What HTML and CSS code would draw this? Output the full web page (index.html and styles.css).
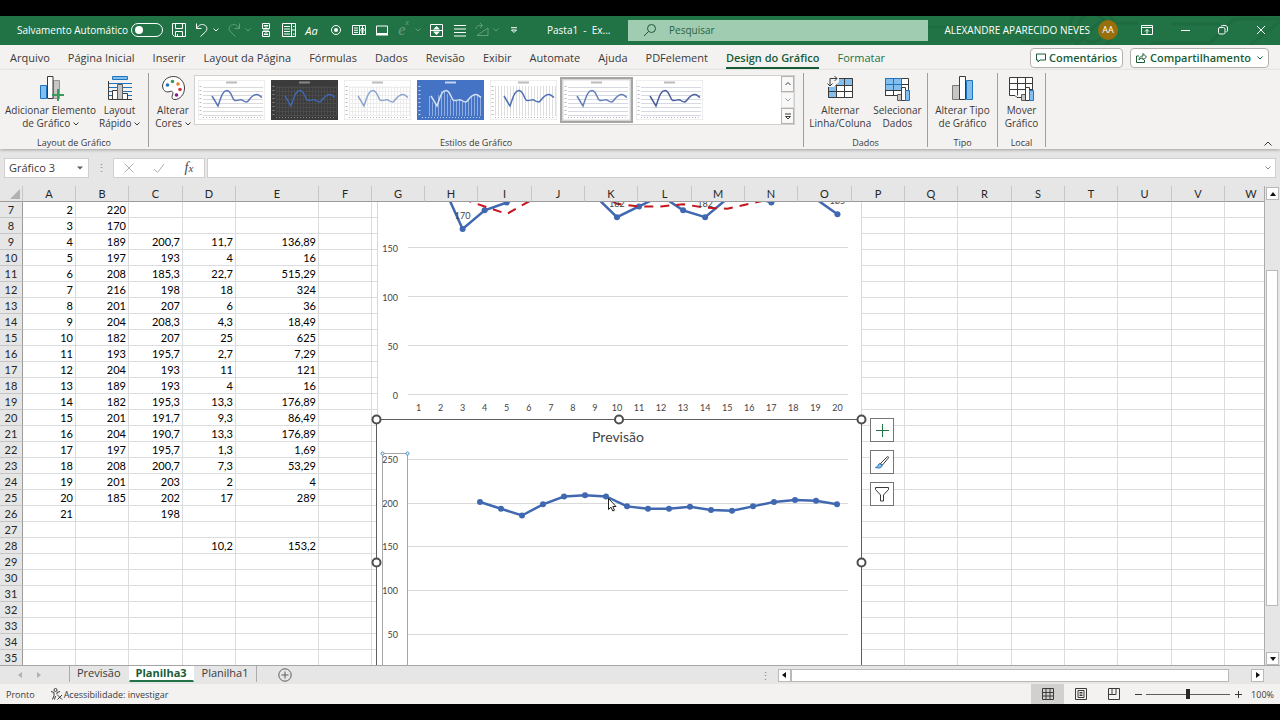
FILE: index.html
```html
<!DOCTYPE html>
<html lang="pt-BR">
<head>
  <meta charset="UTF-8">
  <title>Pasta1 - Excel</title>
  <link rel="stylesheet" href="styles.css">
</head>
<body>

  <!-- barra de título -->
  <header class="titlebar">
    <svg class="title-art" width="360" height="29" viewBox="0 0 360 29">
      <g fill="none" stroke="#185c37" stroke-width="3" opacity=".3">
        <path d="M0 11h40M100 25h60l18-18h40"/><circle cx="172" cy="12" r="22"/><circle cx="172" cy="12" r="14"/>
        <path d="M230 27h60l24-24h46M330 29l30-24M250 8h50"/>
      </g>
    </svg>
    <label class="autosave">Salvamento Automático <input type="checkbox" class="toggle"></label>
    <div class="qat">
      <button class="qbtn" aria-label="Salvar"><svg width="16" height="16"><path d="M1.500 1.500h13v13h-11l-2-2zM4.500 1.500v5h7v-5M4.500 14.500v-5h7v5M6.500 14v-2"/></svg></button>
      <button class="qbtn" aria-label="Desfazer"><svg width="16" height="16"><path d="M2.500 1.500v5h5M2.500 6.500C5 2.500 8 1.800 10.500 3c3 1.600 3 4.800 1 6.800L6.500 14.500"/></svg></button>
      <button class="drop" aria-label="Opções de desfazer"><svg width="6" height="4"><path d="M.5.5 3 3 5.500.5"/></svg></button>
      <button class="qbtn off" aria-label="Refazer"><svg width="16" height="16"><path d="M13.500 1.500v5h-5M13.500 6.500C11 2.500 8 1.800 5.500 3c-3 1.600-3 4.800-1 6.800l5 4.700"/></svg></button>
      <button class="drop off" aria-label="Opções de refazer"><svg width="6" height="4"><path d="M.5.5 3 3 5.500.5"/></svg></button>
      <button class="qbtn" aria-label="Barra de rolagem"><svg width="16" height="16"><path d="M4.500 1.500h7v5h-7zM4.500 9.500h7v5h-7zM6 3.500h4L8 5.500zM6 12.500h4l-2-2zM5 8h6"/></svg></button>
      <button class="qbtn" aria-label="Caixa de listagem"><svg width="16" height="16"><path d="M1.500 1.500h13v13h-13zM10.500 1.500v13M3 4.500h6M3 7h6M3 9.500h6M3 12h6M12 4.500h1.500M12 12h1.500M10.500 8h4"/></svg></button>
      <button class="qbtn aa" aria-label="Fonte">Aa</button>
      <button class="qbtn" aria-label="Botão de opção"><svg width="16" height="16"><circle cx="9" cy="8" r="4.500"/><circle cx="9" cy="8" r="2" class="solid"/></svg></button>
      <button class="qbtn" aria-label="Caixa de combinação"><svg width="16" height="16"><path d="M2.500 3.500h13v9h-13zM9.500 3.500v9M4 6h4M4 8.200h4M4 10.400h4M9.500 8h6M11 6.500h3M11 10h3M12.500 4v8"/></svg></button>
      <button class="qbtn" aria-label="Botão"><svg width="16" height="16"><path d="M3.500 4h11v7.500h-11z"/><path d="M3 12.500h12" stroke-width="2"/></svg></button>
      <button class="qbtn off ex" aria-label="Sobrescrito">e<sup>x</sup></button>
      <button class="drop off" aria-label="Opções de equação"><svg width="6" height="4"><path d="M.5.5 3 3 5.500.5"/></svg></button>
      <button class="qbtn" aria-label="Botão de rotação"><svg width="16" height="16"><path d="M2.500 2.500h12v12h-12zM3 8.500h11"/><path class="solid" d="M5 7.500h7L8.500 4zM5 9.500h7L8.500 13z"/></svg></button>
      <button class="qbtn" aria-label="Justificar"><svg width="16" height="16"><path d="M3 3.500h12M3 7h12M3 10.500h12M3 14h12"/></svg></button>
      <button class="qbtn off" aria-label="Girar"><svg width="16" height="16"><path d="M3 13.500h11V6zM2 7c0-3 3-4 6-3.500M6 1l2.500 2.500L6 6"/></svg></button>
      <button class="drop off" aria-label="Opções de girar"><svg width="6" height="4"><path d="M.5.5 3 3 5.500.5"/></svg></button>
      <button class="qbtn" aria-label="Personalizar"><svg width="8" height="7"><path d="M1 .7h6M1.500 3 4 5.500 6.500 3z"/></svg></button>
    </div>
    <span class="doc-name">Pasta1&nbsp; -&nbsp; Ex...</span>
    <label class="search">
      <svg width="14" height="14" viewBox="0 0 14 14"><circle cx="8.500" cy="5.500" r="4"/><path d="M5.500 8.500 1 13"/></svg>
      <input type="search" placeholder="Pesquisar" aria-label="Pesquisar">
    </label>
    <div class="account">
      <span class="user">ALEXANDRE APARECIDO NEVES</span>
      <span class="avatar">AA</span>
      <button class="winbtn" aria-label="Exibição da faixa"><svg width="12" height="10"><path d="M.5.5h11v9H.5zM.5 2.500h11M6 9V4.500M4 6.500l2-2 2 2"/></svg></button>
      <button class="winbtn" aria-label="Minimizar"><svg width="10" height="10"><path d="M1 5.500h9"/></svg></button>
      <button class="winbtn" aria-label="Restaurar"><svg width="10" height="10"><rect x=".5" y="2.500" width="6.500" height="6.500" rx="1.500"/><path d="M3 1.500C3 .8 4 .5 5 .5h2C8.500.5 9.500 1.500 9.500 3v2c0 1-.5 2-1.200 2"/></svg></button>
      <button class="winbtn" aria-label="Fechar"><svg width="10" height="10"><path d="M1 1l8 8M9 1 1 9"/></svg></button>
    </div>
  </header>

  <!-- guias da faixa de opções -->
  <nav class="tabs">
    <a href="#">Arquivo</a>
    <a href="#">Página Inicial</a>
    <a href="#">Inserir</a>
    <a href="#">Layout da Página</a>
    <a href="#">Fórmulas</a>
    <a href="#">Dados</a>
    <a href="#">Revisão</a>
    <a href="#">Exibir</a>
    <a href="#">Automate</a>
    <a href="#">Ajuda</a>
    <a href="#">PDFelement</a>
    <a href="#" class="active">Design do Gráfico</a>
    <a href="#" class="context">Formatar</a>
    <div class="tab-actions">
      <button class="pill"><svg width="10" height="10"><path d="M.5 1h9v6H4L2 9V7H.5z"/></svg>Comentários</button>
      <button class="pill"><svg width="11" height="11"><path d="M3 4H.5v6.500h8V8M3 8c0-3 2-4 4-4V1.500L10.500 5 7 8V6C5.500 6 4 6.500 3 8z"/></svg>Compartilhamento<svg class="pill-drop" width="6" height="4"><path d="M.5.5 3 3 5.500.5"/></svg></button>
    </div>
  </nav>

  <!-- faixa de opções -->
  <section class="ribbon">
    <div class="group g-layout">
      <div class="group-body">
        <button class="rbtn rbtn-wide">
          <svg width="26" height="26"><path fill="#83beec" stroke="#1e74bd" d="M2.500 10.500h6v13h-6z"/><path fill="#c8c6c4" stroke="#979593" d="M15.500 5.500h6v18h-6z"/><path fill="#fff" stroke="#3b3a39" d="M9.500 1.500h5.500v22H9.500z"/><path stroke="#3c9a5f" stroke-width="2" d="M20 14v12M14 20h12"/></svg>
          <span>Adicionar Elemento<br>de Gráfico <svg class="chev" width="6" height="4"><path d="M.5.5 3 3 5.500.5"/></svg></span>
        </button>
        <button class="rbtn">
          <svg width="26" height="26"><path fill="#83beec" stroke="#1e74bd" d="M5.500 1.500h15v3h-15z"/><path stroke="#1e74bd" d="M1 8.500h24M1 12.500h24M1 16.500h24M1 20.500h24"/><path fill="#fff" stroke="#3b3a39" d="M5.500 15.500h5v9h-5zM15.500 18.500h5v6h-5z"/><path fill="#c8c6c4" stroke="#605e5c" d="M10.500 9.500h5v15h-5z"/><path stroke="#3b3a39" d="M1.500 6v18.500H25"/></svg>
          <span>Layout<br>Rápido <svg class="chev" width="6" height="4"><path d="M.5.5 3 3 5.500.5"/></svg></span>
        </button>
      </div>
      <div class="group-label">Layout de Gráfico</div>
    </div>
    <div class="group g-styles">
      <div class="group-body">
        <button class="rbtn">
          <svg width="26" height="26"><path fill="#fff" stroke="#3b3a39" d="M2.500 11C3 5 8 1.500 13.500 1.500c6 0 11 5 11 11.500S20 24.500 15 24.500c-3 0-3.500-2-2.500-4.500s0-4.500-2.500-3.500-7 .5-7.500-5.500z"/><circle cx="7.500" cy="10" r="1.800" fill="#2372ba" stroke="none"/><circle cx="12.500" cy="6.500" r="1.800" fill="#3c9a5f" stroke="none"/><circle cx="18" cy="9" r="1.800" fill="#e8842c" stroke="none"/><circle cx="20" cy="14.500" r="1.800" fill="#d13438" stroke="none"/><circle cx="16.500" cy="20" r="1.800" fill="#881798" stroke="none"/></svg>
          <span>Alterar<br>Cores <svg class="chev" width="6" height="4"><path d="M.5.5 3 3 5.500.5"/></svg></span>
        </button>
        <div class="gallery">
          <div class="thumbs" id="thumbs"></div>
          <div class="gallery-scroll">
            <button aria-label="Linha acima"><svg width="6" height="4"><path d="M.5 3 3 .5 5.500 3"/></svg></button>
            <button aria-label="Linha abaixo" disabled><svg width="6" height="4"><path d="M.5.5 3 3 5.500.5"/></svg></button>
            <button aria-label="Mais estilos"><svg width="8" height="7"><path d="M1 1h6M1.500 3.500 4 6l2.500-2.500z"/></svg></button>
          </div>
        </div>
      </div>
      <div class="group-label">Estilos de Gráfico</div>
    </div>
    <div class="group g-data">
      <div class="group-body">
        <button class="rbtn">
          <svg width="26" height="26"><path fill="#fff" stroke="#3b3a39" d="M1.500 3.500h24v19h-24z"/><path fill="#83beec" stroke="none" d="M9 4h16v6H9zM2 11h7v11H2z"/><path stroke="#3b3a39" d="M1.500 10.500h24M1.500 16.500h24M9.500 3.500v19M17.500 3.500v19M1.500 22.500h24v-19"/><path fill="#f3f2f1" stroke="none" d="M0 0h12v7L7 12H0z"/><path stroke="#3b3a39" d="M3 11V3.500h7M.5 8.500 3 11l2.500-2.500M7.500 1 10 3.500 7.500 6"/></svg>
          <span>Alternar<br>Linha/Coluna</span>
        </button>
        <button class="rbtn">
          <svg width="26" height="26"><path fill="#fff" stroke="#3b3a39" d="M1.500 3.500h23v17h-23z"/><path fill="#83beec" stroke="#1e74bd" d="M1.500 3.500h16v12h-16zM1.500 9.500h16M9.500 3.500v12"/><path stroke="#3b3a39" d="M1.500 15.500h16M17.500 9.500h7M9.500 15v5M1.500 15v5.500H14"/><path fill="#c8c6c4" stroke="#605e5c" d="M13.500 19.500h4v6h-4z"/><path fill="#fff" stroke="#3b3a39" d="M17.500 12.500h4v13h-4z"/><path fill="#83beec" stroke="#1e74bd" d="M21.500 15.500h4v10h-4z"/></svg>
          <span>Selecionar<br>Dados</span>
        </button>
      </div>
      <div class="group-label">Dados</div>
    </div>
    <div class="group g-type">
      <div class="group-body">
        <button class="rbtn">
          <svg width="26" height="26"><path fill="#c8c6c4" stroke="#797775" d="M2.500 10.500h7v14h-7z"/><path fill="#83beec" stroke="#1e74bd" d="M16.500 5.500h6v19h-6z"/><path fill="#fff" stroke="#3b3a39" d="M9.500 1.500h6v23h-6z"/></svg>
          <span>Alterar Tipo<br>de Gráfico</span>
        </button>
      </div>
      <div class="group-label">Tipo</div>
    </div>
    <div class="group g-place">
      <div class="group-body">
        <button class="rbtn">
          <svg width="26" height="26"><path fill="#fff" stroke="#3b3a39" d="M1.500 2.500h23v20H9l-2-2H1.500z"/><path stroke="#3b3a39" d="M1.500 8.500h23M1.500 14.500h23M9.500 2.500v18M17.500 2.500v18"/><path fill="#c8c6c4" stroke="#605e5c" d="M13.500 19.500h4v6h-4z"/><path fill="#fff" stroke="#3b3a39" d="M17.500 12.500h4v13h-4z"/><path fill="#83beec" stroke="#1e74bd" d="M21.500 15.500h4v10h-4z"/></svg>
          <span>Mover<br>Gráfico</span>
        </button>
      </div>
      <div class="group-label">Local</div>
    </div>
    <button class="collapse" aria-label="Recolher"><svg width="8" height="5"><path d="M.5 4.500 4 1l3.500 3.500"/></svg></button>
  </section>

  <!-- barra de fórmulas -->
  <section class="formula-bar">
    <div class="name-box">
      <input type="text" value="Gráfico 3" aria-label="Caixa de nome">
      <svg width="6" height="4"><path d="M0 .5h6L3 3.500z"/></svg>
    </div>
    <span class="dots">⋮</span>
    <div class="fx-buttons">
      <button aria-label="Cancelar" disabled><svg width="12" height="12"><path d="M1.500 1.500l9 9M10.500 1.500l-9 9"/></svg></button>
      <button aria-label="Inserir" disabled><svg width="12" height="12"><path d="M1 7l3.500 3.500L11 2"/></svg></button>
      <button class="fx">f<sub>x</sub></button>
    </div>
    <div class="formula">
      <input type="text" aria-label="Fórmula">
      <svg width="6" height="4"><path d="M.5.5 3 3 5.500.5"/></svg>
    </div>
  </section>

  <!-- planilha -->
  <main class="workspace">
    <div class="sheet">
      <table class="grid" id="grid"></table>
      <svg class="chart chart-top" id="chartTop" width="485" height="218"></svg>
      <svg class="chart chart-forecast" id="chartForecast" width="486" height="260"></svg>
      <div class="chart-tools">
        <button aria-label="Elementos do gráfico"><svg width="16" height="16"><path stroke="#217346" d="M8.500 2v13M2 8.500h13"/></svg></button>
        <button aria-label="Estilos de gráfico"><svg width="16" height="16"><path fill="#83beec" stroke="#1e74bd" d="M1.500 13.500c3-.5 2-3.500 4.500-4l2 2c0 2.500-3.500 3-6.500 2z"/><path fill="#fff" stroke="#3b3a39" d="M6.500 9.500 13 3c1-1 2 0 1.200 1.200L8.500 11z"/></svg></button>
        <button aria-label="Filtros de gráfico"><svg width="16" height="16"><path fill="#fff" stroke="#3b3a39" d="M1.500 1.500h13v2L9.500 9v6h-3V9l-5-5.500z"/></svg></button>
      </div>
      <svg class="cursor" width="10" height="14"><path fill="#fff" stroke="#222" d="M.5.5v11l2.500-2.300 1.800 3.800 1.700-.8-1.700-3.700H8z"/></svg>
    </div>
    <div class="vscroll">
      <button aria-label="Rolar para cima"><svg width="6" height="4"><path d="M0 4h6L3 0z"/></svg></button>
      <div class="vtrack"><div class="vthumb"></div></div>
      <button aria-label="Rolar para baixo"><svg width="6" height="4"><path d="M0 0h6L3 4z"/></svg></button>
    </div>
  </main>

  <!-- guias das planilhas -->
  <footer class="sheet-bar">
    <div class="sheet-nav">
      <button aria-label="Anterior" disabled><svg width="4" height="6"><path d="M4 0v6L0 3z"/></svg></button>
      <button aria-label="Próxima" disabled><svg width="4" height="6"><path d="M0 0v6l4-3z"/></svg></button>
    </div>
    <div class="sheet-tabs">
      <button>Previsão</button>
      <button class="active">Planilha3</button>
      <button>Planilha1</button>
    </div>
    <button class="add-sheet" aria-label="Nova planilha"><svg width="14" height="14"><circle cx="7" cy="7" r="6.200"/><path d="M7 3.500v7M3.500 7h7"/></svg></button>
    <span class="dots">⋮</span>
    <div class="hscroll">
      <button aria-label="Rolar para a esquerda"><svg width="4" height="6"><path d="M4 0v6L0 3z"/></svg></button>
      <div class="htrack"><div class="hthumb"></div></div>
      <button aria-label="Rolar para a direita"><svg width="4" height="6"><path d="M0 0v6l4-3z"/></svg></button>
    </div>
  </footer>

  <!-- barra de status -->
  <footer class="status-bar">
    <span>Pronto</span>
    <button class="access"><svg width="13" height="12"><circle cx="5.500" cy="2" r="1.500"/><path d="M1 3.500l3 1v3l-1.500 4M10 3.500l-3 1v2M5.500 8l-1 3.500M7.500 7l4.500 4.500M12 7l-4.500 4.500"/></svg>Acessibilidade: investigar</button>
    <div class="views">
      <button class="active" aria-label="Normal"><svg width="12" height="12"><path d="M.5.5h11v11H.5zM.5 4.500h11M.5 8h11M4 .5v11M8 .5v11"/></svg></button>
      <button aria-label="Layout da Página"><svg width="12" height="12"><path d="M.5.5h11v11H.5zM3 2.500h6v7H3zM4.500 4.500h3M4.500 6h3M4.500 7.500h3"/></svg></button>
      <button aria-label="Quebra de página"><svg width="12" height="12"><path d="M.5.5h11v11H.5zM4 .5v6M8 .5v6M.5 6.500H8"/></svg></button>
    </div>
    <div class="zoom">
      <button aria-label="Reduzir"><svg width="7" height="7"><path d="M0 3.500h7"/></svg></button>
      <input type="range" min="10" max="190" value="100" aria-label="Zoom">
      <button aria-label="Ampliar"><svg width="7" height="7"><path d="M0 3.500h7M3.500 0v7"/></svg></button>
      <span class="zoom-value">100%</span>
    </div>
  </footer>

  <script src="script.js"></script>
</body>
</html>
```

FILE: styles.css
```css
* {
  box-sizing: border-box;
}
body {
  margin: 0;
  padding: 16px 0;
  height: 100vh;
  display: flex;
  flex-direction: column;
  background: #000;
  color: #3b3a39;
  font-family: "Open Sans", "Noto Sans", sans-serif;
  font-size: 11px;
  overflow: hidden;
}
button, input {
  font: inherit;
  color: inherit;
  margin: 0;
  padding: 0;
  border: none;
  background: none;
}
svg {
  fill: none;
  stroke: currentColor;
  flex: none;
}
.off {
  opacity: .3;
}

/* barra de título */
.titlebar {
  position: relative;
  flex: none;
  height: 29px;
  padding-bottom: 1px;
  display: flex;
  align-items: center;
  background: #217346;
  color: #fff;
}
.title-art {
  position: absolute;
  right: 0;
  top: 0;
}
.autosave {
  width: 167px;
  padding-left: 17px;
  display: flex;
  align-items: center;
  gap: 3px;
  font-size: 10px;
  white-space: nowrap;
}
.toggle {
  appearance: none;
  width: 32px;
  height: 14px;
  border: 1px solid #fff;
  border-radius: 7px;
  padding: 2px 3px;
}
.toggle::before {
  content: "";
  display: block;
  width: 8px;
  height: 8px;
  border-radius: 50%;
  background: #fff;
}
.qat {
  display: flex;
  height: 24px;
}
.qbtn {
  width: 23px;
  display: flex;
  align-items: center;
  justify-content: center;
}
.drop {
  width: 9px;
  display: flex;
  align-items: center;
}
.qat .solid {
  fill: #fff;
  stroke: none;
}
.aa {
  font-style: italic;
}
.ex {
  font-family: "Liberation Serif", serif;
  font-style: italic;
  font-size: 16px;
}
.ex sup {
  font-size: 8px;
  align-self: flex-start;
}
.doc-name {
  width: 103px;
  padding-left: 22px;
  font-size: 10px;
  white-space: nowrap;
}
.search {
  flex: 0 1 300px;
  height: 21px;
  display: flex;
  align-items: center;
  gap: 12px;
  padding-left: 15px;
  background: #a0cdb2;
  color: #1e5638;
  position: relative;
}
.search input {
  width: 100%;
  outline: none;
  font-size: 10px;
}
.search input::placeholder {
  color: #2c6344;
  opacity: 1;
}
.account {
  position: relative;
  margin-left: auto;
  display: flex;
  align-items: center;
  height: 100%;
}
.user {
  font-size: 10px;
  white-space: nowrap;
}
.avatar {
  width: 20px;
  height: 20px;
  margin: 0 10px 0 8px;
  border-radius: 50%;
  background: #986f0b;
  font-size: 9px;
  line-height: 20px;
  text-align: center;
}
.winbtn {
  width: 38px;
  height: 100%;
  display: flex;
  align-items: center;
  justify-content: center;
}

/* guias */
.tabs {
  flex: none;
  height: 25px;
  display: flex;
  align-items: center;
  gap: 18px;
  padding: 0 11px 0 10px;
  background: #f3f2f1;
}
.tabs a {
  color: #3b3a39;
  text-decoration: none;
  white-space: nowrap;
  line-height: 18px;
  border-bottom: 2px solid transparent;
  padding-top: 2px;
}
.tabs .active {
  color: #185c37;
  font-weight: 600;
  border-color: #185c37;
}
.tabs .context {
  color: #217346;
}
.tab-actions {
  margin-left: auto;
  display: flex;
  gap: 7px;
}
.pill {
  height: 20px;
  display: flex;
  align-items: center;
  gap: 3px;
  padding: 0 5px;
  border: 1px solid #b3b0ad;
  border-radius: 4px;
  background: #fff;
  color: #185c37;
  font-weight: 600;
}
.pill-drop {
  margin-left: 3px;
}

/* faixa de opções */
.ribbon {
  flex: none;
  height: 79px;
  display: flex;
  align-items: stretch;
  padding: 3px 0 2px;
  background: #f3f2f1;
  position: relative;
  font-size: 10px;
  box-shadow: 0 1px 3px rgba(0,0,0,.3);
  z-index: 1;
}
.group {
  flex: none;
  display: flex;
  flex-direction: column;
  justify-content: space-between;
  border-right: 1px solid #a19f9d;
}
.group-body {
  display: flex;
  justify-content: center;
}
.group-label {
  text-align: center;
  font-size: 9px;
  line-height: 8px;
}
.g-layout {
  width: 149px;
}
.g-layout .group-body {
  justify-content: flex-start;
  padding-left: 2px;
}
.g-styles {
  width: 655px;
}
.g-styles .group-body {
  justify-content: flex-start;
}
.g-styles .rbtn {
  width: 45px;
  padding-left: 3px;
}
.g-data {
  width: 124px;
}
.g-type {
  width: 70px;
}
.g-place {
  width: 48px;
}
.rbtn {
  display: flex;
  flex-direction: column;
  align-items: center;
  gap: 3px;
  padding: 2px 0 0;
  line-height: 13px;
  white-space: nowrap;
}
.rbtn-wide {
  width: 97px;
}
.chev {
  vertical-align: middle;
}
.gallery {
  display: flex;
  width: 601px;
  height: 50px;
  margin-top: 2px;
  background: #fff;
  border: 1px solid #d2d0ce;
}
.thumbs {
  flex: 1;
  display: flex;
  align-items: center;
}
.thumb {
  width: 73px;
  height: 46px;
  padding: 1px;
  border: 2px solid transparent;
}
.thumb svg {
  display: block;
}
.thumb.selected {
  border-color: #a6a6a6;
  background: #d4d4d4;
}
.gallery-scroll {
  width: 13px;
  display: flex;
  flex-direction: column;
}
.gallery-scroll button {
  flex: 1;
  display: flex;
  align-items: center;
  justify-content: center;
  border: 1px solid #b3b0ad;
  background: #f8f8f8;
}
.gallery-scroll button:disabled {
  border-color: #e1dfdd;
  color: #a19f9d;
}
.g-data .group-body {
  gap: 2px;
}
.collapse {
  margin: auto 8px 0 auto;
  height: 8px;
  display: flex;
  align-items: center;
}

/* barra de fórmulas */
.formula-bar {
  flex: none;
  height: 37px;
  display: flex;
  align-items: center;
  padding: 0 4px;
  background: #e6e6e6;
}
.name-box, .formula, .fx-buttons {
  height: 20px;
  display: flex;
  align-items: center;
  border: 1px solid #d2d0ce;
  background: #fff;
}
.name-box {
  width: 85px;
  padding: 0 5px 0 4px;
}
.name-box input {
  width: 100%;
}
.name-box svg {
  fill: #605e5c;
  stroke: none;
}
.dots {
  width: 24px;
  text-align: center;
  color: #8a8886;
}
.fx-buttons {
  width: 92px;
  color: #b3b0ad;
}
.fx-buttons button {
  flex: 1;
}
.fx-buttons svg {
  display: block;
  margin: auto;
}
.fx-buttons .fx {
  color: #484644;
  font-family: "Liberation Serif", serif;
  font-style: italic;
  font-size: 14px;
  line-height: 16px;
}
.fx sub {
  font-size: 11px;
  vertical-align: baseline;
}
.formula {
  flex: 1;
  margin-left: 2px;
  padding-right: 4px;
  color: #8a8886;
}
.formula input {
  flex: 1;
  outline: none;
}

/* planilha */
.workspace {
  flex: 1;
  min-height: 0;
  display: flex;
  background: #e6e6e6;
}
.sheet {
  position: relative;
  flex: 1;
  min-width: 0;
  overflow: hidden;
  background: #fff;
}
.grid {
  table-layout: fixed;
  width: 1278px;
  border-collapse: separate;
  border-spacing: 0;
  font-family: Lato, Carlito, sans-serif;
  font-size: 11px;
  color: #000;
}
.grid th, .grid td {
  height: 16px;
  padding: 0 2px;
  line-height: 15px;
  border-right: 1px solid #dadcdd;
  border-bottom: 1px solid #dadcdd;
  white-space: nowrap;
}
.grid td {
  text-align: right;
}
.grid th {
  background: #e6e6e6;
  font-weight: normal;
  color: #262626;
  border-color: #c6c6c6;
}
.grid thead th {
  border-bottom-color: #9b9b9b;
}
.grid tbody th {
  border-right-color: #9b9b9b;
}
.corner svg {
  display: block;
  margin-left: auto;
  fill: #b2b2b2;
  stroke: none;
}
.chart {
  position: absolute;
  background: #fff;
  overflow: hidden;
}
.chart text {
  font-family: Lato, Carlito, sans-serif;
  font-size: 9px;
  fill: #444;
  stroke: none;
}
.chart .title {
  font-size: 14px;
}
.chart .gridline {
  stroke: #d9d9d9;
}
.chart .actual {
  stroke: #4068b1;
  stroke-width: 2.500;
}
.chart .forecast {
  stroke: #c4161c;
  stroke-width: 2;
  stroke-dasharray: 9 7;
}
.chart .dot {
  fill: #4068b1;
  stroke: none;
}
.chart .frame {
  stroke: #5f5f5f;
}
.chart .axis-box {
  stroke: #a6a6a6;
}
.chart .handle {
  fill: #fff;
  stroke: #4d4d4d;
  stroke-width: 2;
}
.chart .mini-handle {
  fill: #fff;
  stroke: #3a8fc0;
}
.chart-top {
  left: 377px;
  top: 16px;
}
.chart-forecast {
  left: 376px;
  top: 233px;
  overflow: visible;
}
.chart-tools {
  position: absolute;
  left: 870px;
  top: 232px;
  display: flex;
  flex-direction: column;
  gap: 8px;
}
.chart-tools button {
  width: 24px;
  height: 24px;
  display: flex;
  align-items: center;
  justify-content: center;
  border: 1px solid #767676;
  background: #fff;
}
.cursor {
  position: absolute;
  left: 608px;
  top: 312px;
}
.vscroll {
  width: 16px;
  display: flex;
  flex-direction: column;
  padding: 1px 2px 0 1px;
  border-left: 1px solid #ababab;
}
.vscroll button, .hscroll button {
  flex: none;
  width: 13px;
  height: 13px;
  display: flex;
  align-items: center;
  justify-content: center;
  border: 1px solid #b9b9b9;
  background: #fff;
  color: #111;
}
.vscroll svg, .hscroll svg, .sheet-nav svg {
  fill: currentColor;
  stroke: none;
}
.vtrack {
  flex: 1;
  padding-top: 70px;
}
.vthumb {
  height: 88%;
  border: 1px solid #b9b9b9;
  background: #fff;
}

/* guias das planilhas */
.sheet-bar {
  flex: none;
  height: 19px;
  display: flex;
  align-items: center;
  background: #e6e6e6;
  border-top: 1px solid #a6a6a6;
}
.sheet-nav {
  width: 69px;
  padding-left: 18px;
  display: flex;
  gap: 15px;
  color: #b3b0ad;
}
.sheet-nav button {
  display: flex;
}
.sheet-tabs {
  display: flex;
  align-self: stretch;
  padding-bottom: 2px;
}
.sheet-tabs button {
  padding: 0 7px 2px;
  line-height: 14px;
  border-left: 1px solid #ababab;
  border-right: 1px solid transparent;
}
.sheet-tabs .active {
  background: #fff;
  color: #185c37;
  font-weight: bold;
  padding: 0 6px;
  border-color: transparent;
  border-bottom: 2px solid #217346;
}
.sheet-tabs button:last-child {
  border-color: transparent #ababab transparent transparent;
}
.add-sheet {
  margin-left: 21px;
  display: flex;
  color: #605e5c;
}
.sheet-bar .dots {
  margin-left: auto;
}
.hscroll {
  flex: none;
  width: 38%;
  display: flex;
  margin-right: 16px;
}
.htrack {
  flex: 1;
  padding-right: 22px;
}
.hthumb {
  height: 13px;
  border: 1px solid #b9b9b9;
  background: #fff;
}

/* barra de status */
.status-bar {
  flex: none;
  height: 20px;
  display: flex;
  align-items: center;
  padding: 0 6px;
  background: #f3f2f1;
  font-size: 9px;
}
.access {
  display: flex;
  align-items: center;
  gap: 1px;
  margin-left: 15px;
}
.views {
  margin-left: auto;
  display: flex;
  align-self: stretch;
}
.views button {
  width: 33px;
  display: flex;
  align-items: center;
  justify-content: center;
}
.views .active {
  background: #d2d0ce;
}
.zoom {
  display: flex;
  align-items: center;
  margin-left: 5px;
}
.zoom button {
  display: flex;
}
.zoom input {
  appearance: none;
  width: 84px;
  height: 10px;
  margin: 0 5px 0 4px;
  background: linear-gradient(#605e5c, #605e5c) center / 100% 1px no-repeat;
}
.zoom input::-webkit-slider-thumb {
  appearance: none;
  width: 4px;
  height: 10px;
  background: #262626;
}
.zoom-value {
  margin-left: 9px;
}
```

FILE: script.js
```js
const SVG_NS = "http://www.w3.org/2000/svg";

const rows = {
  7: ["2", "220"],
  8: ["3", "170"],
  9: ["4", "189", "200,7", "11,7", "136,89"],
  10: ["5", "197", "193", "4", "16"],
  11: ["6", "208", "185,3", "22,7", "515,29"],
  12: ["7", "216", "198", "18", "324"],
  13: ["8", "201", "207", "6", "36"],
  14: ["9", "204", "208,3", "4,3", "18,49"],
  15: ["10", "182", "207", "25", "625"],
  16: ["11", "193", "195,7", "2,7", "7,29"],
  17: ["12", "204", "193", "11", "121"],
  18: ["13", "189", "193", "4", "16"],
  19: ["14", "182", "195,3", "13,3", "176,89"],
  20: ["15", "201", "191,7", "9,3", "86,49"],
  21: ["16", "204", "190,7", "13,3", "176,89"],
  22: ["17", "197", "195,7", "1,3", "1,69"],
  23: ["18", "208", "200,7", "7,3", "53,29"],
  24: ["19", "201", "203", "2", "4"],
  25: ["20", "185", "202", "17", "289"],
  26: ["21", "", "198"],
  28: ["", "", "", "10,2", "153,2"]
};
const colWidths = [53, 53, 54, 53, 83, 53, 53, 53, 54, 53, 53, 54, 53, 53, 54, 53, 53, 54, 53, 53, 54, 53, 53];

const actual = [216, 220, 170, 189, 197, 208, 216, 201, 204, 182, 193, 204, 189, 182, 201, 204, 197, 208, 201, 185];
const forecast = [200.7, 193, 185.3, 198, 207, 208.3, 207, 195.7, 193, 193, 195.3, 191.7, 190.7, 195.7, 200.7, 203, 202, 198];

const chartStyles = [
  { bg: "#fff", line: "#5b76b8", grid: "#dadada", h: true },
  { bg: "#3b3b3b", line: "#3f66b0", grid: "#4a4a4a", h: true, v: true },
  { bg: "#fff", line: "#8ca5cf", grid: "#ececec", h: true, v: true },
  { bg: "#4472c4", line: "#d5e0f5", grid: "#8fadde", drops: true },
  { bg: "#fff", line: "#4f70b5", grid: "#dedede", v: true },
  { bg: "#fff", line: "#6580bb", grid: "#d5dae2", h: true, selected: true },
  { bg: "#fff", line: "#4a5f9c", grid: "#d5dae2", h: true }
];

function add(parent, tag, attrs, text) {
  const el = document.createElementNS(SVG_NS, tag);
  for (const key in attrs) el.setAttribute(key, attrs[key]);
  if (text !== undefined) el.textContent = text;
  parent.appendChild(el);
  return el;
}

function buildGrid() {
  let html = '<colgroup><col style="width:23px">';
  colWidths.forEach(w => html += `<col style="width:${w}px">`);
  html += '</colgroup><thead><tr><th class="corner"><svg width="10" height="10"><path d="M10 0v10H0z"/></svg></th>';
  colWidths.forEach((w, i) => html += `<th>${String.fromCharCode(65 + i)}</th>`);
  html += "</tr></thead><tbody>";
  for (let r = 7; r <= 35; r++) {
    const cells = rows[r] || [];
    html += `<tr><th>${r}</th>`;
    colWidths.forEach((w, i) => html += `<td>${cells[i] || ""}</td>`);
    html += "</tr>";
  }
  document.getElementById("grid").innerHTML = html + "</tbody>";
}

function drawThumbs() {
  const box = document.getElementById("thumbs");
  chartStyles.forEach((s, n) => {
    const btn = document.createElement("button");
    btn.className = "thumb" + (s.selected ? " selected" : "");
    btn.setAttribute("aria-label", "Estilo " + (n + 1));
    const svg = add(btn, "svg", { width: 67, height: 40 });
    add(svg, "rect", { width: 67, height: 40, fill: s.bg, stroke: s.bg === "#fff" ? "#ddd" : "none" });
    let d = "";
    if (s.h) for (let y = 7; y < 37; y += 4) d += `M5 ${y}.500H65`;
    if (s.v) for (let x = 5; x < 66; x += 3) d += `M${x}.500 6V36`;
    if (s.drops) [16, 22, 23, 15, 11, 11, 14, 19, 20, 20, 20, 21, 22, 20, 17, 15, 14, 16].forEach((y, i) => d += `M${12.500 + i * 3} ${y}V36`);
    add(svg, "path", { d: d, stroke: s.grid, "stroke-width": 1 });
    const ink = s.bg === "#fff" ? "#bbb" : s.drops ? "#c5d4f0" : "#888";
    add(svg, "path", { d: "M28 2.500H39", stroke: ink, "stroke-width": 2 });
    add(svg, "path", { d: "M5 37.500H65", stroke: ink, "stroke-dasharray": "1 2" });
    add(svg, "path", { d: "M2.500 6V37", stroke: ink, "stroke-dasharray": "1 3", "stroke-width": 2 });
    add(svg, "path", {
      d: "M14 16 20 26C23 18 24 11 29 10.500 34 11 34 20 37 20.500 40 21 42 19 44 20 47 22 49 23 51 20 54 16 56 14.500 59 14.500 61 14.500 62 16 64 17.500",
      stroke: s.line, "stroke-width": 1.500
    });
    box.appendChild(btn);
  });
}

function drawSeries(svg, values, x0, step, toY, cls, dots) {
  const pts = values.map((v, i) => [x0 + i * step, toY(v)]);
  add(svg, "polyline", { class: cls, points: pts.map(p => p.join(",")).join(" ") });
  if (dots) pts.forEach(p => add(svg, "circle", { class: "dot", cx: p[0], cy: p[1], r: 3 }));
}

function drawTopChart() {
  const svg = document.getElementById("chartTop");
  const toY = v => 193 - v * 0.977;
  const toX = n => 41.500 + (n - 1) * 22.050;
  [0, 50, 100, 150].forEach(v => {
    const y = Math.round(toY(v)) - 0.500;
    add(svg, "line", { class: "gridline", x1: 31, x2: 471, y1: y, y2: y });
    add(svg, "text", { x: 21, y: y + 4, "text-anchor": "end" }, v);
  });
  for (let n = 1; n <= 20; n++) {
    add(svg, "text", { x: toX(n), y: 209, "text-anchor": "middle" }, n);
  }
  drawSeries(svg, actual, toX(1), 22.050, toY, "actual", true);
  drawSeries(svg, forecast, toX(3), 22.050, toY, "forecast", false);
  [3, 10, 14, 20].forEach(n => {
    add(svg, "text", { x: toX(n), y: toY(actual[n - 1]) - 10, "text-anchor": "middle" }, actual[n - 1]);
  });
  add(svg, "path", { class: "gridline", d: "M.5 0V218M484.500 0V218" });
}

function drawForecastChart() {
  const svg = document.getElementById("chartForecast");
  const toY = v => 259 - v * 0.877;
  [50, 100, 150, 200, 250].forEach(v => {
    const y = Math.round(toY(v)) + 0.500;
    add(svg, "line", { class: "gridline", x1: 32, x2: 472, y1: y, y2: y });
    add(svg, "text", { x: 22, y: y + 3, "text-anchor": "end" }, v);
  });
  add(svg, "text", { class: "title", x: 242, y: 23, "text-anchor": "middle" }, "Previsão");
  drawSeries(svg, forecast, 104, 21, toY, "actual", true);
  add(svg, "path", { class: "axis-box", d: "M6.500 260V34.500H31.500V260" });
  [6.500, 31.500].forEach(x => add(svg, "circle", { class: "mini-handle", cx: x, cy: 34.500, r: 1.500 }));
  add(svg, "path", { class: "frame", d: "M.5 260V.5H485.500V260" });
  [[0.500, 0.500], [243, 0.500], [485.500, 0.500], [0.500, 143.500], [485.500, 143.500]].forEach(p => {
    add(svg, "circle", { class: "handle", cx: p[0], cy: p[1], r: 4 });
  });
}

buildGrid();
drawThumbs();
drawTopChart();
drawForecastChart();
```
